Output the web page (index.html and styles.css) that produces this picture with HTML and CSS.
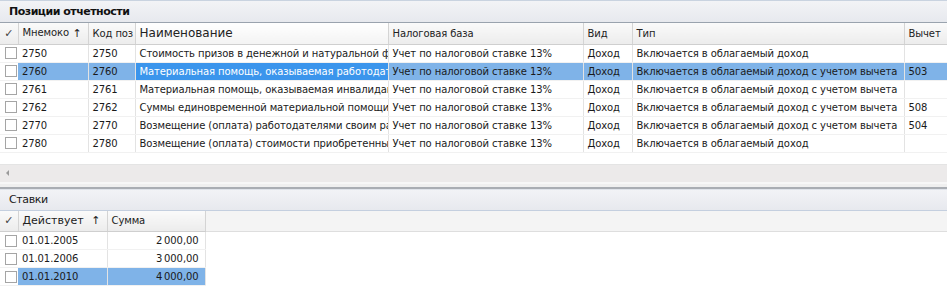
FILE: index.html
```html
<!DOCTYPE html>
<html>
<head>
<meta charset="utf-8">
<link rel="stylesheet" href="styles.css">
</head>
<body>
<div class="app">
  <section class="panel panel-top">
    <div class="panel-head bold">Позиции отчетности</div>
    <table class="grid">
      <colgroup>
        <col style="width:18px"><col style="width:70px"><col style="width:47px"><col style="width:253px"><col style="width:195px"><col style="width:49px"><col style="width:272px"><col style="width:43px">
      </colgroup>
      <thead>
        <tr>
          <th class="chk-h">✓</th>
          <th><span class="sort">Мнемоко<span class="arrow">↑</span></span></th>
          <th>Код поз</th>
          <th class="big">Наименование</th>
          <th>Налоговая база</th>
          <th>Вид</th>
          <th>Тип</th>
          <th>Вычет</th>
        </tr>
      </thead>
      <tbody>
        <tr><td class="chk"><span class="box"></span></td><td>2750</td><td>2750</td><td>Стоимость призов в денежной и натуральной ф</td><td>Учет по налоговой ставке 13%</td><td>Доход</td><td>Включается в облагаемый доход</td><td></td></tr>
        <tr class="sel"><td class="chk"><span class="box"></span></td><td>2760</td><td>2760</td><td class="focus">Материальная помощь, оказываемая работодат</td><td>Учет по налоговой ставке 13%</td><td>Доход</td><td>Включается в облагаемый доход с учетом вычета</td><td>503</td></tr>
        <tr><td class="chk"><span class="box"></span></td><td>2761</td><td>2761</td><td>Материальная помощь, оказываемая инвалидам</td><td>Учет по налоговой ставке 13%</td><td>Доход</td><td>Включается в облагаемый доход с учетом вычета</td><td></td></tr>
        <tr><td class="chk"><span class="box"></span></td><td>2762</td><td>2762</td><td>Суммы единовременной материальной помощи, о</td><td>Учет по налоговой ставке 13%</td><td>Доход</td><td>Включается в облагаемый доход с учетом вычета</td><td>508</td></tr>
        <tr><td class="chk"><span class="box"></span></td><td>2770</td><td>2770</td><td>Возмещение (оплата) работодателями своим ра</td><td>Учет по налоговой ставке 13%</td><td>Доход</td><td>Включается в облагаемый доход с учетом вычета</td><td>504</td></tr>
        <tr><td class="chk"><span class="box"></span></td><td>2780</td><td>2780</td><td>Возмещение (оплата) стоимости приобретенных</td><td>Учет по налоговой ставке 13%</td><td>Доход</td><td>Включается в облагаемый доход</td><td></td></tr>
      </tbody>
    </table>
    <div class="grid-empty"></div>
    <div class="hscroll"><span class="larrow"></span></div>
  </section>
  <div class="splitter"></div>
  <section class="panel panel-bottom">
    <div class="panel-head">Ставки</div>
    <div class="sub-head">
      <table class="grid grid-small">
        <colgroup><col style="width:18px"><col style="width:89px"><col style="width:98px"></colgroup>
        <thead>
          <tr><th class="chk-h">✓</th><th class="mid"><span class="sort">Действует<span class="arrow">↑</span></span></th><th>Сумма</th></tr>
        </thead>
        <tbody>
          <tr><td class="chk"><span class="box"></span></td><td>01.01.2005</td><td class="num">2&#8201;000,00</td></tr>
          <tr><td class="chk"><span class="box"></span></td><td>01.01.2006</td><td class="num">3&#8201;000,00</td></tr>
          <tr class="sel"><td class="chk"><span class="box"></span></td><td>01.01.2010</td><td class="num">4&#8201;000,00</td></tr>
        </tbody>
      </table>
      <div class="head-fill"></div>
    </div>
  </section>
</div>
</body>
</html>
```
FILE: styles.css
```css
* { box-sizing: border-box; }
html, body { margin: 0; padding: 0; background: #fff; }
body {
  width: 947px;
  height: 289px;
  overflow: hidden;
  font-family: "DejaVu Sans", Tahoma, sans-serif;
  font-size: 10px;
  letter-spacing: -0.1px;
  color: #1a1a1a;
}
.app { display: flex; flex-direction: column; }
.panel-head {
  height: 23px;
  padding: 0 9px;
  display: flex;
  align-items: center;
  background: linear-gradient(#f2f3f6, #e7e9ee);
  border-top: 1px solid #c9d3e0;
  border-bottom: 1px solid #9aa3ae;
  font-size: 11px;
  letter-spacing: -0.4px;
}
.panel-head.bold { font-weight: bold; color: #111; letter-spacing: -0.5px; }
.grid {
  border-collapse: collapse;
  table-layout: fixed;
  width: 947px;
}
.grid th {
  height: 21px;
  padding: 0 4px;
  text-align: left;
  font-weight: normal;
  white-space: nowrap;
  overflow: hidden;
  background: linear-gradient(#fafafa, #ececec);
  border-right: 1px solid #d4d4d4;
  border-bottom: 1px solid #cfcfcf;
  color: #222;
}
.grid th.big { font-size: 12px; letter-spacing: 0; background: linear-gradient(#ffffff, #f3f3f3); }
.grid th.mid { font-size: 11px; letter-spacing: 0; }
.grid th.chk-h { padding: 0; text-align: center; font-size: 11px; color: #444; }
.sort { display: flex; justify-content: space-between; }
.arrow { font-size: 11px; margin-right: 2px; }
.grid td {
  height: 18px;
  padding: 0 4px;
  white-space: nowrap;
  overflow: hidden;
  text-overflow: clip;
  border-right: 1px solid #e3e3e3;
  border-bottom: 1px solid #f1f1f1;
}
.grid td.chk { padding: 0 0 0 5px; border-right: none; }
.box {
  display: block;
  width: 12px;
  height: 12px;
  border: 1px solid #a5a5a5;
  background: #fff;
}
.grid tr.sel td { background: #7fb3e8; }
.grid tr.sel td.chk { background: #fff; }
.grid tr.sel td.focus { background: #3b95ec; color: #fff; }
.grid-empty { height: 11px; }
.hscroll {
  height: 18px;
  background: #eceaea;
  border-top: 1px solid #e4e4e4;
  display: flex;
  align-items: center;
  padding-left: 6px;
}
.larrow {
  width: 0; height: 0;
  border-top: 3px solid transparent;
  border-bottom: 3px solid transparent;
  border-right: 3px solid #9a9a9a;
}
.splitter {
  height: 7px;
  background: #efefef;
  border-top: 2px solid #f7f7f7;
  border-bottom: 2px solid #a9adb3;
}
.panel-bottom .panel-head { border-top: 1px solid #dfe3ea; border-bottom: 1px solid #c4cfdf; height: 22px; }
.sub-head { display: flex; align-items: flex-start; }
.grid-small { width: 205px; }
.grid-small td.num { text-align: right; padding-right: 6px; }
.grid-small tr.sel td.chk { background: #fff; }
.head-fill {
  flex: 1;
  height: 21px;
  background: #f4f4f4;
  border-bottom: 1px solid #dedede;
}
```
